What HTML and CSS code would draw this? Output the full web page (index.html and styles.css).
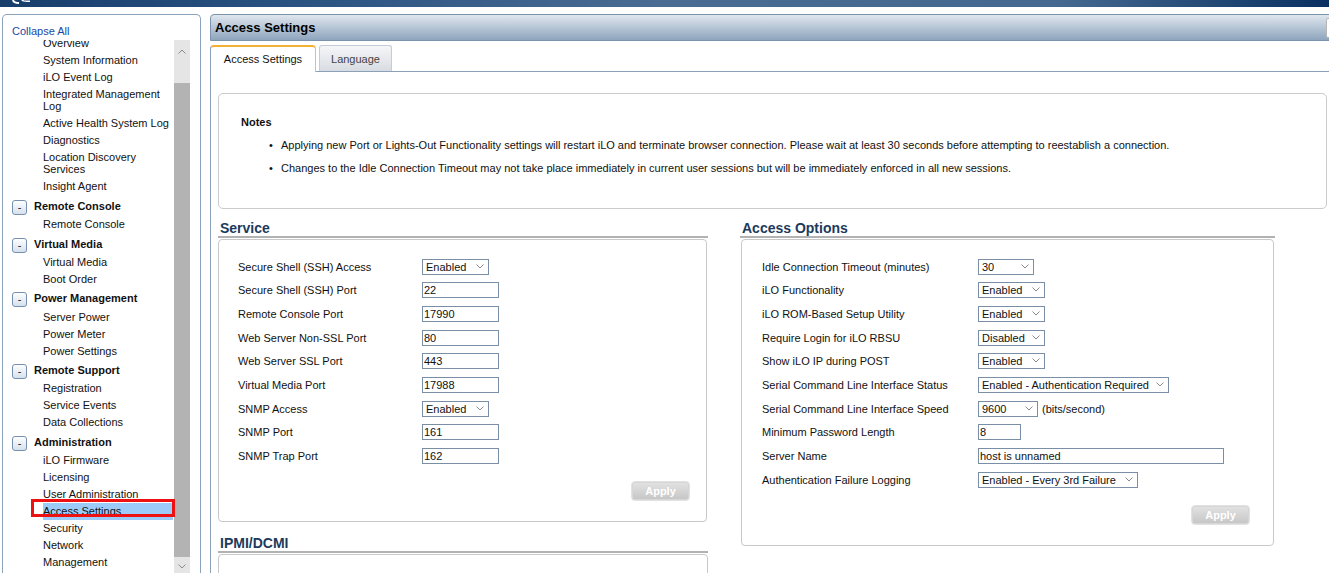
FILE: index.html
```html
<!DOCTYPE html>
<html lang="en">
<head>
<meta charset="utf-8">
<title>iLO - Access Settings</title>
<link rel="stylesheet" href="styles.css">
</head>
<body>
<header class="topbar">
  <svg class="logo" width="22" height="7" viewBox="0 0 22 7"><path d="M1 0 C1.5 2.5 3.5 3 7 3" stroke="#fff" stroke-width="2" fill="none"/><path d="M10 0 C10.5 1 13 1.5 18 1.2" stroke="#fff" stroke-width="1.6" fill="none"/></svg>
</header>
<div class="page">
  <aside class="sidebar">
    <a class="collapse" href="#">Collapse All</a>
    <div class="navwrap">
      <div class="navview">
        <ul class="nav">
          <li class="item"><a href="#">Overview</a></li>
          <li class="item"><a href="#">System Information</a></li>
          <li class="item"><a href="#">iLO Event Log</a></li>
          <li class="item"><a href="#">Integrated Management Log</a></li>
          <li class="item"><a href="#">Active Health System Log</a></li>
          <li class="item"><a href="#">Diagnostics</a></li>
          <li class="item"><a href="#">Location Discovery Services</a></li>
          <li class="item"><a href="#">Insight Agent</a></li>
          <li class="grp"><span class="toggle">-</span><span class="grp-label">Remote Console</span></li>
          <li class="item"><a href="#">Remote Console</a></li>
          <li class="grp"><span class="toggle">-</span><span class="grp-label">Virtual Media</span></li>
          <li class="item"><a href="#">Virtual Media</a></li>
          <li class="item"><a href="#">Boot Order</a></li>
          <li class="grp"><span class="toggle">-</span><span class="grp-label">Power Management</span></li>
          <li class="item"><a href="#">Server Power</a></li>
          <li class="item"><a href="#">Power Meter</a></li>
          <li class="item"><a href="#">Power Settings</a></li>
          <li class="grp"><span class="toggle">-</span><span class="grp-label">Remote Support</span></li>
          <li class="item"><a href="#">Registration</a></li>
          <li class="item"><a href="#">Service Events</a></li>
          <li class="item"><a href="#">Data Collections</a></li>
          <li class="grp"><span class="toggle">-</span><span class="grp-label">Administration</span></li>
          <li class="item"><a href="#">iLO Firmware</a></li>
          <li class="item"><a href="#">Licensing</a></li>
          <li class="item"><a href="#">User Administration</a></li>
          <li class="item active"><a href="#">Access Settings</a><span class="mark"></span></li>
          <li class="item"><a href="#">Security</a></li>
          <li class="item"><a href="#">Network</a></li>
          <li class="item"><a href="#">Management</a></li>
        </ul>
      </div>
      <div class="scrollbar">
        <div class="sb-btn"><svg width="8" height="5" viewBox="0 0 8 5"><path d="M0.5 4.5 L4 1 L7.5 4.5" fill="none" stroke="#8a8a8a" stroke-width="1"/></svg></div>
        <div class="sb-track"></div>
        <div class="sb-thumb"></div>
        <div class="sb-btn sb-down"><svg width="8" height="5" viewBox="0 0 8 5"><path d="M0.5 0.5 L4 4 L7.5 0.5" fill="none" stroke="#8a8a8a" stroke-width="1"/></svg></div>
      </div>
      <div class="sb-gap"></div>
    </div>
  </aside>

  <main class="main">
    <div class="titlebar">
      <h1>Access Settings</h1>
      <span class="tb-btn"></span>
    </div>
    <div class="tabs">
      <div class="tab tab-active">Access Settings</div>
      <div class="tab tab-idle">Language</div>
    </div>
    <div class="content">
      <div class="notes">
        <h4>Notes</h4>
        <ul>
          <li><span class="bullet">•</span><span>Applying new Port or Lights-Out Functionality settings will restart iLO and terminate browser connection. Please wait at least 30 seconds before attempting to reestablish a connection.</span></li>
          <li><span class="bullet">•</span><span>Changes to the Idle Connection Timeout may not take place immediately in current user sessions but will be immediately enforced in all new sessions.</span></li>
        </ul>
      </div>

      <div class="columns">
        <div class="col col-service">
          <section>
            <h2 class="sec-title">Service</h2>
            <div class="box box-service">
              <div class="form form-service">
                <label>Secure Shell (SSH) Access</label>
                <span class="select w67"><select><option>Enabled</option></select><svg class="chev" width="8" height="5" viewBox="0 0 8 5"><path d="M0.5 0.5 L4 4 L7.5 0.5" fill="none" stroke="#8a8a8a" stroke-width="1"/></svg></span>
                <label>Secure Shell (SSH) Port</label>
                <input class="text w77" type="text" value="22">
                <label>Remote Console Port</label>
                <input class="text w77" type="text" value="17990">
                <label>Web Server Non-SSL Port</label>
                <input class="text w77" type="text" value="80">
                <label>Web Server SSL Port</label>
                <input class="text w77" type="text" value="443">
                <label>Virtual Media Port</label>
                <input class="text w77" type="text" value="17988">
                <label>SNMP Access</label>
                <span class="select w67"><select><option>Enabled</option></select><svg class="chev" width="8" height="5" viewBox="0 0 8 5"><path d="M0.5 0.5 L4 4 L7.5 0.5" fill="none" stroke="#8a8a8a" stroke-width="1"/></svg></span>
                <label>SNMP Port</label>
                <input class="text w77" type="text" value="161">
                <label>SNMP Trap Port</label>
                <input class="text w77" type="text" value="162">
              </div>
              <div class="actions"><button class="apply" disabled>Apply</button></div>
            </div>
          </section>
          <section class="sec-ipmi">
            <h2 class="sec-title">IPMI/DCMI</h2>
            <div class="box box-ipmi"></div>
          </section>
        </div>

        <div class="col col-access">
          <section>
            <h2 class="sec-title">Access Options</h2>
            <div class="box box-access">
              <div class="form form-access">
                <label>Idle Connection Timeout (minutes)</label>
                <span class="select w56"><select><option>30</option></select><svg class="chev" width="8" height="5" viewBox="0 0 8 5"><path d="M0.5 0.5 L4 4 L7.5 0.5" fill="none" stroke="#8a8a8a" stroke-width="1"/></svg></span>
                <label>iLO Functionality</label>
                <span class="select w67"><select><option>Enabled</option></select><svg class="chev" width="8" height="5" viewBox="0 0 8 5"><path d="M0.5 0.5 L4 4 L7.5 0.5" fill="none" stroke="#8a8a8a" stroke-width="1"/></svg></span>
                <label>iLO ROM-Based Setup Utility</label>
                <span class="select w67"><select><option>Enabled</option></select><svg class="chev" width="8" height="5" viewBox="0 0 8 5"><path d="M0.5 0.5 L4 4 L7.5 0.5" fill="none" stroke="#8a8a8a" stroke-width="1"/></svg></span>
                <label>Require Login for iLO RBSU</label>
                <span class="select w67"><select><option>Disabled</option></select><svg class="chev" width="8" height="5" viewBox="0 0 8 5"><path d="M0.5 0.5 L4 4 L7.5 0.5" fill="none" stroke="#8a8a8a" stroke-width="1"/></svg></span>
                <label>Show iLO IP during POST</label>
                <span class="select w67"><select><option>Enabled</option></select><svg class="chev" width="8" height="5" viewBox="0 0 8 5"><path d="M0.5 0.5 L4 4 L7.5 0.5" fill="none" stroke="#8a8a8a" stroke-width="1"/></svg></span>
                <label>Serial Command Line Interface Status</label>
                <span class="select w191"><select><option>Enabled - Authentication Required</option></select><svg class="chev" width="8" height="5" viewBox="0 0 8 5"><path d="M0.5 0.5 L4 4 L7.5 0.5" fill="none" stroke="#8a8a8a" stroke-width="1"/></svg></span>
                <label>Serial Command Line Interface Speed</label>
                <span class="ctl-pair"><span class="select w60"><select><option>9600</option></select><svg class="chev" width="8" height="5" viewBox="0 0 8 5"><path d="M0.5 0.5 L4 4 L7.5 0.5" fill="none" stroke="#8a8a8a" stroke-width="1"/></svg></span><span>(bits/second)</span></span>
                <label>Minimum Password Length</label>
                <input class="text w43" type="text" value="8">
                <label>Server Name</label>
                <input class="text w246" type="text" value="host is unnamed">
                <label>Authentication Failure Logging</label>
                <span class="select w160"><select><option>Enabled - Every 3rd Failure</option></select><svg class="chev" width="8" height="5" viewBox="0 0 8 5"><path d="M0.5 0.5 L4 4 L7.5 0.5" fill="none" stroke="#8a8a8a" stroke-width="1"/></svg></span>
              </div>
              <div class="actions"><button class="apply" disabled>Apply</button></div>
            </div>
          </section>
        </div>
      </div>
    </div>
  </main>
</div>
</body>
</html>
```

FILE: styles.css
```css
* { box-sizing: border-box; }

html, body {
  margin: 0;
  height: 573px;
  overflow: hidden;
}

body {
  font-family: "Liberation Sans", Arial, sans-serif;
  font-size: 11px;
  color: #111;
  background: #fff;
}

/* ---------- top banner ---------- */
.topbar {
  height: 7px;
  padding-left: 12px;
  display: flex;
  align-items: flex-start;
  background: linear-gradient(90deg, #173d6b 0%, #2a5381 22%, #4a6c93 50%, #44688f 80%, #0a3161 100%);
}
.logo { display: block; }

.page {
  display: flex;
  align-items: flex-start;
  padding-top: 7px;
}

/* ---------- sidebar ---------- */
.sidebar {
  margin-left: 2px;
  width: 199px;
  height: 562px;
  flex-shrink: 0;
  border: 1px solid #8ba2bb;
  border-bottom: none;
  border-radius: 5px 5px 0 0;
  display: flex;
  flex-direction: column;
}

.collapse {
  display: block;
  padding: 10px 0 2px 9px;
  line-height: 13px;
  color: #1b48a6;
  text-decoration: none;
}

.navwrap {
  flex: 1;
  min-height: 0;
  display: flex;
}

.navview {
  width: 172px;
  margin-right: -1px;
  overflow: hidden;
  position: relative;
  z-index: 1;
}

.nav {
  list-style: none;
  margin: -5.25px 0 0;
  padding: 0;
}

.nav .item {
  position: relative;
  padding-left: 40px;
  padding-right: 2px;
}
.nav .item a {
  display: block;
  padding: 2.5px 0;
  line-height: 12px;
  color: #111;
  text-decoration: none;
}
.nav .item.active a {
  background: #9ccbfa;
  text-decoration: underline;
}
.mark {
  position: absolute;
  left: 28px;
  top: -3.5px;
  width: 144px;
  height: 18px;
  border: 3px solid #ee1111;
  z-index: 2;
}

.nav .grp {
  height: 20.75px;
  display: flex;
  align-items: flex-start;
  padding-left: 9px;
  font-weight: bold;
}
.toggle {
  margin-top: 5px;
  width: 15px;
  height: 15px;
  border: 1px solid #7590ae;
  border-radius: 3px;
  background: linear-gradient(#fdfeff, #d6e1ed);
  font-weight: normal;
  line-height: 12px;
  text-align: center;
  color: #222;
}
.grp-label {
  margin-left: 7px;
  padding-top: 5px;
  line-height: 13px;
}

.scrollbar {
  width: 16px;
  background: #e5e5e5;
  display: flex;
  flex-direction: column;
}
.sb-btn {
  height: 17px;
  display: flex;
  justify-content: center;
  align-items: flex-start;
  padding-top: 9px;
}
.sb-btn svg { display: block; }
.sb-track { height: 26px; }
.sb-thumb { flex: 1; background: #b3b3b3; }
.sb-down { height: 19px; padding-top: 7px; }
.sb-gap { width: 10px; }

/* ---------- main ---------- */
.main {
  margin-left: 9px;
  width: 1140px;
  flex-shrink: 0;
}

.titlebar {
  height: 27px;
  border: 1px solid #7b93ad;
  border-radius: 4px 0 0 0;
  background: linear-gradient(#dfe6ee, #8ea5bd);
  display: flex;
  align-items: center;
  padding-left: 4px;
}
.titlebar h1 {
  margin: 0;
  font-size: 13px;
  font-weight: bold;
  color: #000;
  line-height: 16px;
}
.tb-btn {
  margin-left: auto;
  margin-right: 3px;
  width: 20px;
  height: 20px;
  background: #fff;
  border: 1px solid #b5b5b5;
  border-radius: 2px;
}

.tabs {
  margin-top: 4px;
  height: 27px;
  display: flex;
  align-items: flex-start;
  border-bottom: 1px solid #8ba1ba;
}
.tab {
  display: flex;
  align-items: center;
  justify-content: center;
}
.tab-active {
  width: 106px;
  height: 27px;
  padding-bottom: 2px;
  background: #fff;
  border-top: 2px solid #f2b134;
  border-left: 1px solid #8ba1ba;
  border-right: 1px solid #b9c3ce;
  border-radius: 4px 4px 0 0;
  color: #111;
  position: relative;
  z-index: 1;
}
.tab-idle {
  margin-left: 3px;
  width: 73px;
  height: 26px;
  border: 1px solid #c6ccd4;
  border-bottom: none;
  border-radius: 3px 3px 0 0;
  background: linear-gradient(#f5f6f8, #d8dce2);
  color: #444;
}

.content {
  border-left: 1px solid #8ba1ba;
  padding: 21px 23px 0 7px;
  height: 520px;
}

.notes {
  border: 1px solid #cbcbcb;
  border-radius: 5px;
  padding: 21px 20px 33px 22px;
}
.notes h4 {
  margin: 0;
  font-size: 11px;
  line-height: 14px;
  font-weight: bold;
}
.notes ul {
  list-style: none;
  margin: 0;
  padding: 0 0 0 28px;
}
.notes li {
  margin-top: 10px;
  line-height: 13px;
  display: flex;
}
.bullet {
  width: 12px;
  flex-shrink: 0;
}

.columns {
  margin-top: 11px;
  display: flex;
  gap: 32px;
}
.col-service { width: 490px; }
.col-access { width: 535px; }

.sec-title {
  margin: 0;
  padding-left: 2px;
  font-size: 14px;
  line-height: 16px;
  font-weight: bold;
  color: #1d3a5c;
  border-bottom: 2px solid #b2b2b2;
}

.box {
  margin: 1px 1px 0 0;
  border: 1px solid #c9c9c9;
  border-radius: 4px;
}
.box-service { padding: 15px 16px 20px 19px; }
.box-access { margin-left: 1px; padding: 15px 23px 20px 20px; }
.box-ipmi { height: 60px; margin-right: 0; }
.sec-ipmi { margin-top: 13px; }

.form {
  display: grid;
  grid-auto-rows: 23.667px;
  align-items: center;
  justify-items: start;
}
.form-service { grid-template-columns: 184px 1fr; }
.form-access { grid-template-columns: 216px 1fr; }
.form label { color: #111; }

.select {
  position: relative;
  display: inline-block;
  height: 16px;
}
.select select {
  -webkit-appearance: none;
  appearance: none;
  display: block;
  width: 100%;
  height: 16px;
  margin: 0;
  padding: 0 0 0 3px;
  border: 1px solid #7a8fa6;
  border-radius: 0;
  background: #fff;
  font-family: inherit;
  font-size: 11px;
  color: #111;
  line-height: 14px;
}
.chev {
  position: absolute;
  right: 5px;
  top: 5px;
  display: block;
}

.text {
  display: block;
  height: 16px;
  margin: 0;
  padding: 0 1px;
  border: 1px solid #7a8fa6;
  border-radius: 0;
  background: #fff;
  font-family: inherit;
  font-size: 11px;
  color: #111;
}

.ctl-pair {
  display: flex;
  align-items: center;
  gap: 4px;
}

.w43 { width: 43px; }
.w56 { width: 56px; }
.w60 { width: 60px; }
.w67 { width: 67px; }
.w77 { width: 77px; }
.w160 { width: 160px; }
.w191 { width: 191px; }
.w246 { width: 246px; }

.actions {
  margin-top: 13px;
  display: flex;
  justify-content: flex-end;
}
.apply {
  width: 59px;
  height: 20px;
  margin: 0;
  padding: 0;
  border: 1px solid #e2e2e2;
  border-radius: 4px;
  background: linear-gradient(#e3e3e3, #c5c5c5);
  box-shadow: inset 0 0 0 1px #d6d6d6;
  color: #fff;
  font-family: inherit;
  font-size: 11px;
  font-weight: bold;
}
```
